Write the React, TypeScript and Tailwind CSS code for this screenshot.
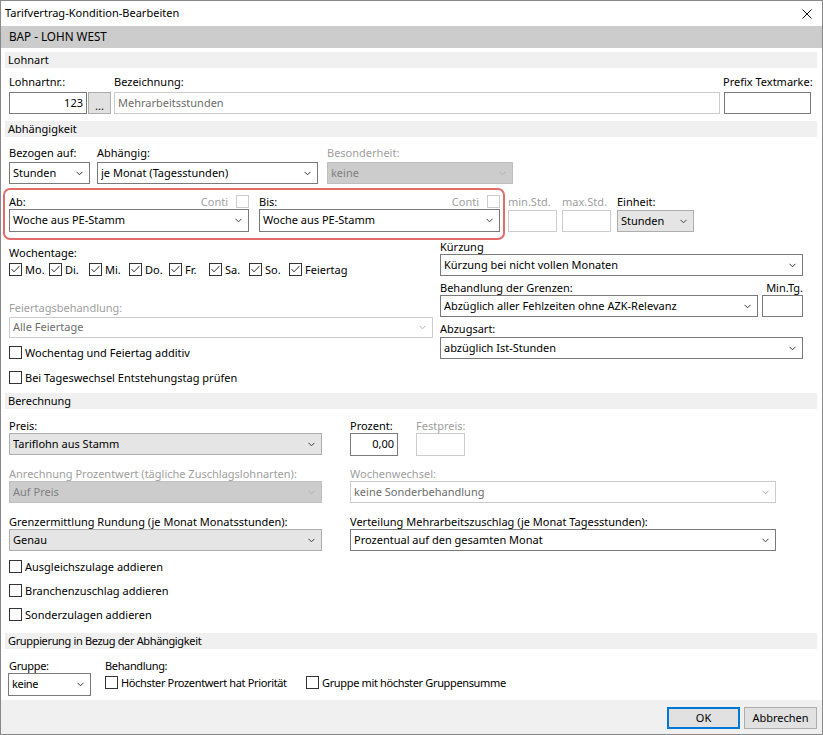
import React from "react";

type V = "white" | "gray" | "disabled" | "disabledWhite";

const variants: Record<V, string> = {
  white: "bg-white border-[#7a7a7a] text-black",
  gray: "bg-[#e5e5e5] border-[#adadad] text-black",
  disabled: "bg-[#cccccc] border-[#bfbfbf] text-[#808080]",
  disabledWhite: "bg-white border-[#cccccc] text-[#6d6d6d]",
};

function Chevron({ disabled }: { disabled?: boolean }) {
  return (
    <svg width="7" height="5" viewBox="0 0 7 5" className="shrink-0">
      <path d="M0.5 0.8 L3.5 3.8 L6.5 0.8" fill="none" stroke={disabled ? "#b0b0b0" : "#3c3c3c"} strokeWidth="1" />
    </svg>
  );
}

function Select({ text, cls, v = "white", h = "h-[22px]" }: { text: string; cls: string; v?: V; h?: string }) {
  return (
    <div className={`${cls} ${h} ${variants[v]} border flex items-center justify-between pl-[3px] pr-[6px] shrink-0`}>
      <span className="whitespace-nowrap overflow-hidden">{text}</span>
      <Chevron disabled={v === "disabled" || v === "disabledWhite"} />
    </div>
  );
}

function Input({ text = "", cls, v = "white", h = "h-[22px]", align = "right" }: { text?: string; cls: string; v?: V; h?: string; align?: "left" | "right" }) {
  return (
    <div className={`${cls} ${h} ${variants[v]} border flex items-center ${align === "right" ? "justify-end pr-[3px]" : "justify-start pl-[3px]"} shrink-0`}>
      <span className="whitespace-nowrap">{text}</span>
    </div>
  );
}

function Label({ children, gray, cls = "" }: { children: React.ReactNode; gray?: boolean; cls?: string }) {
  return <div className={`h-[15px] leading-[15px] whitespace-nowrap ${gray ? "text-[#a0a0a0]" : "text-black"} ${cls}`}>{children}</div>;
}

function Box({ checked, disabled }: { checked?: boolean; disabled?: boolean }) {
  return (
    <div className={`w-[13px] h-[13px] border ${disabled ? "border-[#cccccc]" : "border-[#333333]"} bg-white shrink-0 flex items-center justify-center`}>
      {checked && (
        <svg width="11" height="11" viewBox="0 0 11 11">
          <path d="M1.5 5 L4 7.8 L9.5 2" fill="none" stroke="#333333" strokeWidth="1" />
        </svg>
      )}
    </div>
  );
}

function Check({ label, checked, cls = "" }: { label: string; checked?: boolean; cls?: string }) {
  return (
    <div className={`flex items-center h-[13px] ${cls}`}>
      <Box checked={checked} />
      <span className="ml-[3px] whitespace-nowrap leading-[13px]">{label}</span>
    </div>
  );
}

function Section({ title, cls = "" }: { title: string; cls?: string }) {
  return <div className={`h-[16px] bg-[#f0f0f0] pl-[3px] leading-[16px] shrink-0 ${cls}`}>{title}</div>;
}

export default function App() {
  const days = ["Mo.", "Di.", "Mi.", "Do.", "Fr.", "Sa.", "So.", "Feiertag"];
  return (
    <div className="w-[823px] h-[735px] border border-[#888888] bg-[#f0f0f0] flex flex-col text-[11px] text-black font-['Noto_Sans',sans-serif] overflow-hidden">
      {/* Title bar */}
      <div className="h-[25px] bg-white flex items-center justify-between pl-[4px] pr-[10px] shrink-0">
        <span className="text-[11px]">Tarifvertrag-Kondition-Bearbeiten</span>
        <svg width="10" height="10" viewBox="0 0 10 10">
          <path d="M0.5 0.5 L9.5 9.5 M9.5 0.5 L0.5 9.5" stroke="#111111" strokeWidth="1" />
        </svg>
      </div>
      <div className="h-[22px] bg-[#cccccc] flex items-center pl-[8px] shrink-0 text-[11.7px]">BAP - LOHN WEST</div>

      {/* Panel */}
      <div className="h-[652px] bg-white pl-[4px] pr-[5px] pt-[4px] flex flex-col shrink-0">
        <Section title="Lohnart" />
        <div className="flex pl-[4px] mt-[6px]">
          <div className="flex flex-col">
            <Label>Lohnartnr.:</Label>
            <div className="flex mt-[3px]">
              <Input text="123" cls="w-[78px]" />
              <div className="ml-[1px] w-[23px] h-[22px] bg-[#e1e1e1] border border-[#adadad] flex items-end justify-center pb-[2px] leading-[11px]">...</div>
            </div>
          </div>
          <div className="flex flex-col ml-[3px]">
            <Label>Bezeichnung:</Label>
            <Input text="Mehrarbeitsstunden" cls="w-[606px] mt-[3px]" v="disabledWhite" align="left" />
          </div>
          <div className="flex flex-col ml-[4px]">
            <Label cls="-ml-[1px]">Prefix Textmarke:</Label>
            <Input cls="w-[87px] mt-[3px]" />
          </div>
        </div>

        <Section title="Abhängigkeit" cls="mt-[7px]" />
        <div className="flex pl-[4px] mt-[8px]">
          <div className="flex flex-col">
            <Label>Bezogen auf:</Label>
            <Select text="Stunden" cls="w-[81px] mt-[2px]" />
          </div>
          <div className="flex flex-col ml-[7px]">
            <Label>Abhängig:</Label>
            <Select text="je Monat (Tagesstunden)" cls="w-[221px] mt-[2px]" />
          </div>
          <div className="flex flex-col ml-[9px]">
            <Label gray>Besonderheit:</Label>
            <Select text="keine" cls="w-[186px] mt-[2px]" v="disabled" />
          </div>
        </div>

        <div className="flex items-start mt-[4px]">
          <div className="-ml-[2px] border-2 border-[#e56b6b] rounded-[7px] pl-[4px] pr-[3px] pt-[4px] pb-[6px] flex">
            <div className="flex flex-col w-[240px]">
              <div className="flex items-center justify-between h-[15px]">
                <span className="leading-[15px]">Ab:</span>
                <div className="flex items-center">
                  <span className="text-[#a0a0a0] leading-[15px]">Conti</span>
                  <div className="ml-[8px]"><Box disabled /></div>
                </div>
              </div>
              <Select text="Woche aus PE-Stamm" cls="w-[240px]" h="h-[23px]" />
            </div>
            <div className="flex flex-col w-[241px] ml-[10px]">
              <div className="flex items-center justify-between h-[15px]">
                <span className="leading-[15px]">Bis:</span>
                <div className="flex items-center">
                  <span className="text-[#a0a0a0] leading-[15px]">Conti</span>
                  <div className="ml-[8px]"><Box disabled /></div>
                </div>
              </div>
              <Select text="Woche aus PE-Stamm" cls="w-[241px]" h="h-[23px]" />
            </div>
          </div>
          <div className="flex flex-col ml-[3px] pt-[6px]">
            <Label gray>min.Std.</Label>
            <Input cls="w-[49px] mt-[1px]" v="disabledWhite" />
          </div>
          <div className="flex flex-col ml-[5px] pt-[6px]">
            <Label gray>max.Std.</Label>
            <Input cls="w-[49px] mt-[1px]" v="disabledWhite" />
          </div>
          <div className="flex flex-col ml-[6px] pt-[6px]">
            <Label>Einheit:</Label>
            <Select text="Stunden" cls="w-[77px] mt-[1px]" v="gray" />
          </div>
        </div>

        <div className="flex pl-[4px]">
          <div className="flex flex-col w-[424px] pt-[5px]">
            <Label>Wochentage:</Label>
            <div className="flex mt-[3px]">
              {days.map((d) => (
                <Check key={d} label={d} checked cls="w-[40px]" />
              ))}
            </div>
            <Label gray cls="mt-[24px]">Feiertagsbehandlung:</Label>
            <Select text="Alle Feiertage" cls="w-[424px] mt-[2px]" h="h-[21px]" v="disabledWhite" />
            <Check label="Wochentag und Feiertag additiv" cls="mt-[8px]" />
            <Check label="Bei Tageswechsel Entstehungstag prüfen" cls="mt-[12px]" />
          </div>
          <div className="flex flex-col w-[363px] ml-[7px] -mt-[1px]">
            <Label>Kürzung</Label>
            <Select text="Kürzung bei nicht vollen Monaten" cls="w-[363px]" />
            <div className="flex justify-between mt-[4px]">
              <Label>Behandlung der Grenzen:</Label>
              <Label>Min.Tg.</Label>
            </div>
            <div className="flex">
              <Select text="Abzüglich aller Fehlzeiten ohne AZK-Relevanz" cls="w-[318px]" />
              <Input cls="w-[41px] ml-[4px]" />
            </div>
            <Label cls="mt-[4px]">Abzugsart:</Label>
            <Select text="abzüglich Ist-Stunden" cls="w-[363px] mt-[1px]" />
          </div>
        </div>

        <Section title="Berechnung" cls="mt-[9px]" />
        <div className="flex pl-[4px] mt-[9px]">
          <div className="flex flex-col w-[313px]">
            <Label>Preis:</Label>
            <Select text="Tariflohn aus Stamm" cls="w-[313px]" v="gray" />
            <Label gray cls="mt-[11px]">Anrechnung Prozentwert (tägliche Zuschlagslohnarten):</Label>
            <Select text="Auf Preis" cls="w-[313px]" v="disabled" />
            <Label cls="mt-[11px]">Grenzermittlung Rundung (je Monat Monatsstunden):</Label>
            <Select text="Genau" cls="w-[313px]" v="gray" />
            <Check label="Ausgleichszulage addieren" cls="mt-[9px]" />
            <Check label="Branchenzuschlag addieren" cls="mt-[11px]" />
            <Check label="Sonderzulagen addieren" cls="mt-[11px]" />
          </div>
          <div className="flex flex-col w-[426px] ml-[28px]">
            <div className="flex">
              <div className="flex flex-col">
                <Label>Prozent:</Label>
                <Input text="0,00" cls="w-[48px]" h="h-[23px]" />
              </div>
              <div className="flex flex-col ml-[18px]">
                <Label gray>Festpreis:</Label>
                <Input cls="w-[49px]" h="h-[23px]" v="disabledWhite" />
              </div>
            </div>
            <Label gray cls="mt-[10px]">Wochenwechsel:</Label>
            <Select text="keine Sonderbehandlung" cls="w-[426px]" v="disabledWhite" />
            <Label cls="mt-[11px]">Verteilung Mehrarbeitszuschlag (je Monat Tagesstunden):</Label>
            <Select text="Prozentual auf den gesamten Monat" cls="w-[426px]" />
          </div>
        </div>

        <div className="flex flex-col tracking-[-0.35px]">
          <Section title="Gruppierung in Bezug der Abhängigkeit" cls="mt-[12px]" />
          <div className="flex pl-[4px] mt-[9px]">
            <div className="flex flex-col">
              <Label>Gruppe:</Label>
              <Select text="keine" cls="w-[83px] -ml-[1px]" h="h-[23px]" />
            </div>
            <div className="flex flex-col ml-[14px]">
              <Label>Behandlung:</Label>
              <div className="flex mt-[3px]">
                <Check label="Höchster Prozentwert hat Priorität" cls="w-[201px]" />
                <Check label="Gruppe mit höchster Gruppensumme" />
              </div>
            </div>
          </div>
        </div>
      </div>

      {/* Footer */}
      <div className="flex-1 flex justify-end items-start pt-[7px] pr-[5px] gap-[4px]">
        <div className="w-[73px] h-[22px] bg-[#e1e1e1] border-2 border-[#0078d7] flex items-center justify-center">OK</div>
        <div className="w-[73px] h-[22px] bg-[#e1e1e1] border border-[#adadad] flex items-center justify-center">Abbrechen</div>
      </div>
    </div>
  );
}
